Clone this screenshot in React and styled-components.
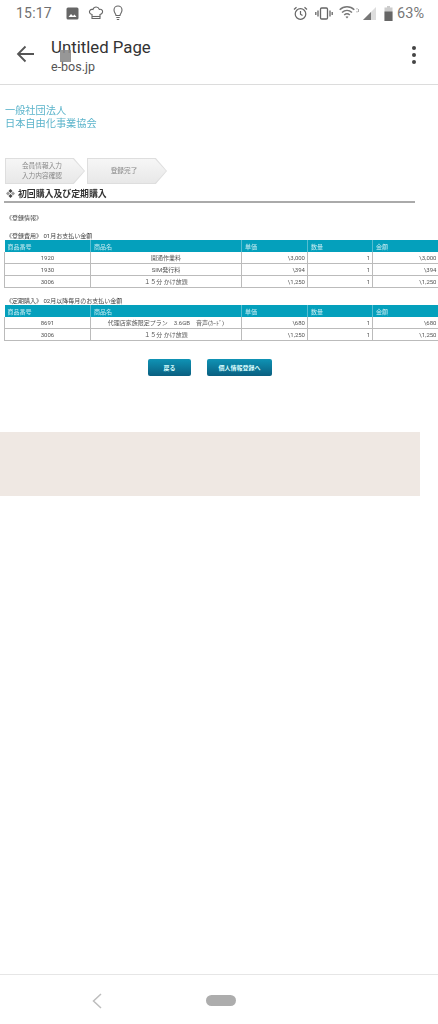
import React from 'react';
import styled, { createGlobalStyle } from 'styled-components';

const Global = createGlobalStyle`
  html, body { margin: 0; padding: 0; background: #fff; }
  body { font-family: Roboto, "Noto Sans CJK JP", sans-serif; }
`;

const Screen = styled.div`
  width: 438px;
  height: 1024px;
  display: flex;
  flex-direction: column;
  overflow: hidden;
  background: #fff;
`;

const StatusBar = styled.div`
  height: 26px;
  padding: 0 14px 0 16px;
  display: flex;
  align-items: center;
  justify-content: space-between;
  color: #6f6f6f;
  flex: none;
`;
const StatusGroup = styled.div`
  display: flex;
  align-items: center;
  gap: ${({ gap }) => gap || 0}px;
`;
const StatusIcon = styled.span`
  display: flex;
  margin-right: ${({ after }) => after}px;
`;
const Clock = styled.span`
  font-size: 14px;
  letter-spacing: 0.2px;
  margin-right: 5px;
`;
const Battery = styled.span`
  font-size: 14.5px;
  color: #777;
`;

const Toolbar = styled.div`
  height: 58px;
  flex: none;
  border-bottom: 1px solid #dcdcdc;
  display: flex;
  align-items: flex-start;
  position: relative;
`;
const BackButton = styled.div`
  width: 51px;
  padding: 19px 0 0 16px;
  box-sizing: border-box;
  flex: none;
`;
const TitleBlock = styled.div`
  padding-top: 11px;
  flex: 1;
`;
const Title = styled.div`
  font-size: 16.8px;
  line-height: 21px;
  color: #333;
`;
const Host = styled.div`
  font-size: 12.5px;
  line-height: 15px;
  color: #555;
  margin-top: 1px;
`;
const Dots = styled.div`
  width: 8px;
  margin: 20px 20px 0 0;
  display: flex;
  flex-direction: column;
  align-items: center;
  gap: 3px;
`;
const Dot = styled.span`
  width: 4px;
  height: 4px;
  border-radius: 50%;
  background: #444;
`;
const GreySquare = styled.div`
  position: absolute;
  left: 60px;
  top: 24px;
  width: 11px;
  height: 12px;
  background: #8c8c8c;
  opacity: 0.9;
`;

const Page = styled.div`
  flex: 1;
  padding-top: 19px;
  filter: blur(0.3px);
`;
const Logo = styled.div`
  padding-left: 5px;
  font-size: 10.2px;
  line-height: 13px;
  color: #5bb4cb;
  height: 54px;
`;
const Steps = styled.div`
  display: flex;
  gap: 2px;
  padding-left: 5px;
`;
const Step = styled.div`
  width: 80px;
  height: 26px;
  background: #dedede;
  clip-path: polygon(0 0, 86% 0, 100% 50%, 86% 100%, 0 100%);
  display: flex;
  position: relative;
  align-items: center;
  justify-content: center;
  text-align: center;
  padding-right: 6px;
  box-sizing: border-box;
  font-size: 6.7px;
  line-height: 10px;
  color: #888;
  &::before {
    content: '';
    position: absolute;
    inset: 1px;
    z-index: 0;
    background: linear-gradient(#f6f6f6, #e8e8e8);
    clip-path: polygon(0 0, 86% 0, 100% 50%, 86% 100%, 0 100%);
  }
`;
const StepLabel = styled.span`
  position: relative;
`;
const Heading = styled.div`
  margin: 2px 23px 0 4px;
  height: 15px;
  border-bottom: 2px solid #aaa;
  display: flex;
  align-items: center;
  gap: 3px;
  padding-left: 2px;
  font-size: 8.9px;
  font-weight: 700;
  color: #333;
`;
const Section = styled.div`
  font-size: 6px;
  line-height: 8px;
  color: #444;
  padding-left: 6px;
  margin-top: ${({ top }) => top}px;
`;
const Table = styled.table`
  width: 434px;
  margin-left: 4px;
  border-collapse: collapse;
  table-layout: fixed;
  font-size: 6px;
  color: #555;
`;
const Col = styled.col`
  width: ${({ w }) => w}px;
`;
const Head = styled.th`
  height: 12px;
  padding: 0 0 0 3px;
  background: #04a0bc;
  border-right: 1px solid #57bdd1;
  color: #c9ecf2;
  font-weight: 400;
  text-align: left;
  &:last-child { border-right: 0; }
`;
const Cell = styled.td`
  height: 11px;
  padding: 0 2px;
  border: 1px solid #bbb;
  border-top: 0;
  text-align: ${({ align }) => align || 'center'};
  white-space: nowrap;
  overflow: hidden;
  &:last-child { border-right: 0; }
`;
const Buttons = styled.div`
  display: flex;
  gap: 16px;
  padding: 18px 0 0 148px;
`;
const Button = styled.div`
  width: ${({ w }) => w}px;
  height: 17px;
  border-radius: 2px;
  background: linear-gradient(#0f93b5, #0a5f80);
  color: #dff;
  font-size: 6px;
  font-weight: 700;
  display: flex;
  align-items: center;
  justify-content: center;
`;
const Band = styled.div`
  width: 420px;
  height: 64px;
  margin-top: 56px;
  background: #efe8e3;
`;

const NavBar = styled.div`
  height: 50px;
  flex: none;
  box-sizing: border-box;
  border-top: 1px solid #e6e6e6;
  display: flex;
  align-items: center;
  padding: 2px 0 0 92px;
  gap: 104px;
`;
const Pill = styled.div`
  width: 30px;
  height: 11px;
  border-radius: 6px;
  background: #adadad;
`;

const columns = [86, 151, 66, 65, 66];
const headers = ['商品番号', '商品名', '単価', '数量', '金額'];

const OrderTable = ({ rows }) => (
  <Table>
    <colgroup>
      {columns.map((w, i) => <Col key={i} w={w} />)}
    </colgroup>
    <thead>
      <tr>{headers.map((h) => <Head key={h}>{h}</Head>)}</tr>
    </thead>
    <tbody>
      {rows.map((r) => (
        <tr key={r[0]}>
          <Cell>{r[0]}</Cell>
          <Cell>{r[1]}</Cell>
          <Cell align="right">{r[2]}</Cell>
          <Cell align="right">1</Cell>
          <Cell align="right">{r[2]}</Cell>
        </tr>
      ))}
    </tbody>
  </Table>
);

export default function App() {
  return (
    <Screen>
      <Global />
      <StatusBar>
        <StatusGroup gap={9}>
          <Clock>15:17</Clock>
          <svg width="13" height="13" viewBox="0 0 13 13"><rect x="0.5" y="0.5" width="12" height="12" rx="1.5" fill="#666" /><path d="M2.5 10l2.5-3 2 2 1.5-1.5 2 2.5z" fill="#fff" /></svg>
          <svg width="16" height="14" viewBox="0 0 16 14" fill="none" stroke="#666" strokeWidth="1.1"><path d="M4 8.5C1.5 8 .8 5.8 2 4.3c.9-1.1 2.2-1 2.9-.8C5.500 1.800 7 1 8.200 1c1.400 0 2.600.8 3.100 2.400 1.300-.4 2.800.1 3.200 1.500.4 1.600-.6 3.200-2.500 3.600V12.500H4z" /><path d="M4 10.500h8.200" /></svg>
          <svg width="10" height="16" viewBox="0 0 10 16" fill="none" stroke="#666" strokeWidth="1.100"><path d="M3 10.500C3 8.800 1 7.800 1 5a4 4 0 018 0c0 2.800-2 3.800-2 5.500z" /><path d="M3.300 12.500h3.400M3.800 14.500h2.400" /></svg>
        </StatusGroup>
        <StatusGroup>
          <StatusIcon after={7}><svg width="15" height="15" viewBox="0 0 15 15" fill="none" stroke="#666" strokeWidth="1.200"><circle cx="7.500" cy="8" r="5.300" /><path d="M7.500 5v3.200l2 1.300M1 3.500L3.500 1.200M14 3.500L11.500 1.200" /></svg></StatusIcon>
          <StatusIcon after={6}><svg width="18" height="13" viewBox="0 0 18 13" fill="none" stroke="#666" strokeWidth="1.300"><rect x="5.500" y="1" width="7" height="11" rx="1.200" /><path d="M3 3.500v6M15 3.500v6M.8 5v3M17.200 5v3" /></svg></StatusIcon>
          <StatusIcon after={3}><svg width="21" height="14" viewBox="0 0 21 14" fill="none"><path d="M.7 3.800C4.800-.2 11.200-.2 15.300 3.800M3 6.500c3-2.800 7-2.800 10 0M5.200 9c1.700-1.500 3.900-1.500 5.600 0" stroke="#777" strokeWidth="1.500" /><path d="M6.500 10.700c1-.7 2-.7 3 0L8 12.600z" fill="#777" /><path d="M18 2v1.500M18 5v1.500M19.500 3v3" stroke="#aaa" strokeWidth="1" /></svg></StatusIcon>
          <StatusIcon after={8}><svg width="13" height="13" viewBox="0 0 13 13"><path d="M0 13L13 0v13z" fill="#ddd" /><path d="M0 13l8-8v8z" fill="#777" /></svg></StatusIcon>
          <StatusIcon after={4}><svg width="9" height="15" viewBox="0 0 9 15"><path d="M3 0h3v1.500h2.500V15H.5V1.500H3z" fill="#ccc" /><path d="M.5 5.500h8V15h-8z" fill="#666" /></svg></StatusIcon>
          <Battery>63%</Battery>
        </StatusGroup>
      </StatusBar>

      <Toolbar>
        <BackButton>
          <svg width="19" height="18" viewBox="0 0 19 18" fill="none" stroke="#555" strokeWidth="1.800"><path d="M18 9H2M9.500 1.500L2 9l7.500 7.500" /></svg>
        </BackButton>
        <TitleBlock>
          <Title>Untitled Page</Title>
          <Host>e-bos.jp</Host>
        </TitleBlock>
        <Dots><Dot /><Dot /><Dot /></Dots>
        <GreySquare />
      </Toolbar>

      <Page>
        <Logo>一般社団法人<br />日本自由化事業協会</Logo>
        <Steps>
          <Step><StepLabel>会員情報入力<br />入力内容確認</StepLabel></Step>
          <Step><StepLabel>登録完了</StepLabel></Step>
        </Steps>
        <Heading>
          <svg width="9" height="9" viewBox="0 0 9 9"><path d="M4.500 0l2 2-2 2-2-2zM4.500 5l2 2-2 2-2-2z" fill="#444" /><path d="M2 2.500l2 2-2 2-2-2zM7 2.500l2 2-2 2-2-2z" fill="#999" /></svg>
          初回購入及び定期購入
        </Heading>
        <Section top={11}>《登録情報》</Section>
        <Section top={10}>《登録費用》 01月お支払い金額</Section>
        <OrderTable rows={[
          ['1920', '開通作業料', '\\3,000'],
          ['1930', 'SIM発行料', '\\394'],
          ['3006', '１５分 かけ放題', '\\1,250'],
        ]} />
        <Section top={9}>《定期購入》 02月以降毎月のお支払い金額</Section>
        <OrderTable rows={[
          ['8691', '代理店家族限定プラン　3.6GB　音声(ｶｰﾄﾞ)', '\\680'],
          ['3006', '１５分 かけ放題', '\\1,250'],
        ]} />
        <Buttons>
          <Button w={43}>戻る</Button>
          <Button w={65}>個人情報登録へ</Button>
        </Buttons>
        <Band />
      </Page>

      <NavBar>
        <svg width="10" height="16" viewBox="0 0 10 16" fill="none" stroke="#bdbdbd" strokeWidth="1.500"><path d="M9 1L1.500 8 9 15" /></svg>
        <Pill />
      </NavBar>
    </Screen>
  );
}
